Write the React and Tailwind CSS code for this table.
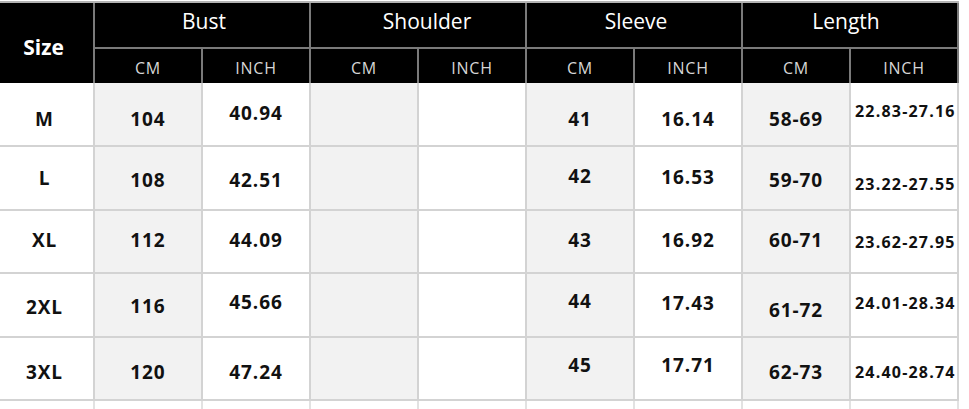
import React from 'react';

const groups = [
  { name: 'Bust', shift: 'pl-[4px]' },
  { name: 'Shoulder', shift: 'pl-[18px]' },
  { name: 'Sleeve', shift: 'pl-[4px]' },
  { name: 'Length', shift: 'pr-[8px]' },
];

// each row: label + 8 values, with a small nudge per cell to sit like the chart
const rows = [
  {
    h: 'h-[64px]',
    cells: [
      ['M', 'translate-y-[5px]'],
      ['104', 'translate-y-[5px]'],
      ['40.94', '-translate-y-[1px]'],
      ['', ''],
      ['', ''],
      ['41', 'translate-y-[5px]'],
      ['16.14', 'translate-y-[5px]'],
      ['58-69', 'translate-y-[5px]'],
      ['22.83-27.16', '-translate-y-[3px]'],
    ],
  },
  {
    h: 'h-[64px]',
    cells: [
      ['L', 'translate-y-[0px]'],
      ['108', 'translate-y-[2px]'],
      ['42.51', 'translate-y-[2px]'],
      ['', ''],
      ['', ''],
      ['42', '-translate-y-[2px]'],
      ['16.53', '-translate-y-[1px]'],
      ['59-70', 'translate-y-[2px]'],
      ['23.22-27.55', 'translate-y-[6px]'],
    ],
  },
  {
    h: 'h-[63px]',
    cells: [
      ['XL', '-translate-y-[1px]'],
      ['112', '-translate-y-[1px]'],
      ['44.09', '-translate-y-[1px]'],
      ['', ''],
      ['', ''],
      ['43', '-translate-y-[1px]'],
      ['16.92', '-translate-y-[1px]'],
      ['60-71', '-translate-y-[1px]'],
      ['23.62-27.95', 'translate-y-[0px]'],
    ],
  },
  {
    h: 'h-[64px]',
    cells: [
      ['2XL', 'translate-y-[2px]'],
      ['116', 'translate-y-[1px]'],
      ['45.66', '-translate-y-[3px]'],
      ['', ''],
      ['', ''],
      ['44', '-translate-y-[4px]'],
      ['17.43', '-translate-y-[2px]'],
      ['61-72', 'translate-y-[5px]'],
      ['24.01-28.34', '-translate-y-[2px]'],
    ],
  },
  {
    h: 'h-[63px]',
    cells: [
      ['3XL', 'translate-y-[4px]'],
      ['120', 'translate-y-[4px]'],
      ['47.24', 'translate-y-[4px]'],
      ['', ''],
      ['', ''],
      ['45', '-translate-y-[3px]'],
      ['17.71', '-translate-y-[3px]'],
      ['62-73', 'translate-y-[4px]'],
      ['24.40-28.74', 'translate-y-[3px]'],
    ],
  },
];

function Cell({ text, nudge, index }) {
  const isSize = index === 0;
  const isCm = !isSize && index % 2 === 1;
  const isLengthInch = index === 8;

  return (
    <div
      className={`flex items-center border-r-2 border-b-2 border-[#d3d3d3] ${
        isSize ? 'w-[95px] bg-white justify-center pr-[4px]' : 'w-[108px]'
      } ${isCm ? 'bg-[#f2f2f2]' : 'bg-white'} ${
        isLengthInch ? 'justify-start pl-[4px]' : 'justify-center'
      }`}
    >
      <span
        className={`whitespace-nowrap font-bold text-[#111] ${nudge} ${
          isLengthInch ? 'text-[16px] tracking-[1.2px]' : 'text-[19px] tracking-[0.9px]'
        }`}
      >
        {text}
      </span>
    </div>
  );
}

export default function App() {
  return (
    <div className="w-[969px] h-[409px] bg-white pt-[1px] font-['Open_Sans',sans-serif] overflow-hidden">
      {/* header */}
      <div className="flex w-[959px] h-[82px] bg-black border-t-2 border-[#b4b4b4]">
        <div className="w-[95px] border-r-2 border-[#7a7a7a] flex items-center justify-center pt-[10px] pr-[6px]">
          <span className="text-white font-bold text-[21px]">Size</span>
        </div>
        {groups.map((g) => (
          <div key={g.name} className="w-[216px] flex flex-col">
            <div
              className={`h-[46px] border-r-2 border-b-2 border-[#7a7a7a] flex items-center justify-center pb-[6px] ${g.shift}`}
            >
              <span className="text-white text-[21px]">{g.name}</span>
            </div>
            <div className="flex flex-1">
              {['CM', 'INCH'].map((u) => (
                <div
                  key={u}
                  className="w-[108px] border-r-2 border-[#7a7a7a] flex items-center justify-center pt-[4px]"
                >
                  <span className="text-[#d6d6d6] text-[16px] tracking-[0.8px]">{u}</span>
                </div>
              ))}
            </div>
          </div>
        ))}
      </div>

      {/* body */}
      {rows.map((r, ri) => (
        <div key={ri} className={`flex w-[959px] ${r.h}`}>
          {r.cells.map(([text, nudge], ci) => (
            <Cell key={ci} text={text} nudge={nudge} index={ci} />
          ))}
        </div>
      ))}

      {/* column stubs below the last line */}
      <div className="flex w-[959px] h-[8px]">
        <div className="w-[95px] border-r-2 border-[#e2e2e2]" />
        {[0, 1, 2, 3, 4, 5, 6, 7].map((i) => (
          <div key={i} className="w-[108px] border-r-2 border-[#e2e2e2]" />
        ))}
      </div>
    </div>
  );
}
